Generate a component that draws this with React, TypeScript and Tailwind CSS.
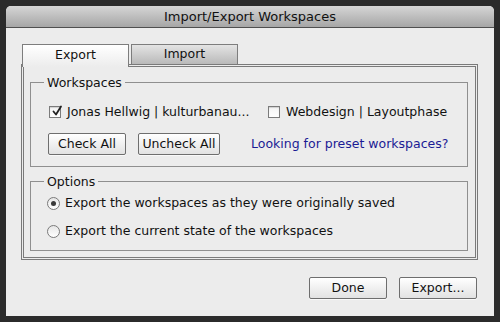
import type { ReactNode } from "react";

// Mac-style "Import/Export Workspaces" sheet, single tab panel.

function Checkbox({ checked }: { checked?: boolean }) {
  return (
    <span className="relative inline-block h-[12px] w-[12px] shrink-0 border border-[#7b7b7b] bg-gradient-to-b from-[#f4f4f4] to-[#ffffff] shadow-[inset_0_1px_1px_rgba(0,0,0,0.15)]">
      {checked && (
        <svg
          viewBox="0 0 12 12"
          className="absolute left-[1px] top-[-2px] h-[12px] w-[12px]"
          fill="none"
          stroke="#222"
          strokeWidth="1.8"
          strokeLinecap="round"
          strokeLinejoin="round"
        >
          <path d="M2.5 6.5 L5 9.5 L10 1.5" />
        </svg>
      )}
    </span>
  );
}

function Radio({ checked }: { checked?: boolean }) {
  return (
    <span className="flex h-[13px] w-[13px] shrink-0 items-center justify-center rounded-full border border-[#7a7a7a] bg-gradient-to-b from-[#e6e6e6] to-[#ffffff]">
      {checked && <span className="h-[5px] w-[5px] rounded-full bg-[#3a3a3a]" />}
    </span>
  );
}

function Button({ children, className = "" }: { children: ReactNode; className?: string }) {
  return (
    <button
      type="button"
      className={`flex h-[22px] items-center justify-center rounded-[2px] border border-[#6e6e6e] bg-gradient-to-b from-[#ffffff] to-[#e2e2e2] text-[12.5px] text-[#111] shadow-[0_1px_0_rgba(255,255,255,0.7)] ${className}`}
    >
      {children}
    </button>
  );
}

function Group({ label, children }: { label: string; children: ReactNode }) {
  return (
    <fieldset className="border border-[#8f8f8f]">
      <legend className="ml-[13px] px-[3px] text-[12.5px] leading-[15px]">{label}</legend>
      {children}
    </fieldset>
  );
}

export default function App() {
  return (
    <div className="h-[322px] w-[500px] bg-[#2b2b2b] px-[6px] pb-[6px] pt-[6px] font-['DejaVu_Sans',sans-serif] text-[12.5px] text-[#111]">
      <div className="flex h-full flex-col overflow-hidden rounded-t-[5px] bg-[#ececec]">
        <div className="flex h-[22px] shrink-0 items-center justify-center border-b border-[#4f4f4f] bg-gradient-to-b from-[#d6d6d6] to-[#a6a6a6] text-[13px] text-[#111]">
          Import/Export Workspaces
        </div>

        <div className="flex flex-1 flex-col pl-[15px] pr-[17px] pt-[16px]">
          {/* tabs */}
          <div className="flex items-start pl-[1px]">
            <div className="relative z-10 -mb-[3px] flex h-[23px] w-[107px] items-center justify-center border border-b-0 border-[#7d7d7d] bg-gradient-to-b from-[#ffffff] to-[#ececec] pb-[1px]">
              Export
            </div>
            <div className="ml-[2px] flex h-[20px] w-[107px] items-center justify-center border border-b-0 border-[#7d7d7d] bg-gradient-to-b from-[#e4e4e4] to-[#b9b9b9]">
              Import
            </div>
          </div>

          {/* tab panel */}
          <div className="flex h-[196px] w-[457px] flex-col border-[3px] border-double border-[#7a7a7a] pl-[6px] pr-[7px] pt-[8px]">
            <Group label="Workspaces">
              <div className="flex h-[16px] items-center pl-[18px] mt-[14px]">
                <label className="flex w-[219px] items-center gap-[6px]">
                  <Checkbox checked />
                  <span>Jonas Hellwig | kulturbanau...</span>
                </label>
                <label className="flex items-center gap-[6px]">
                  <Checkbox />
                  <span>Webdesign | Layoutphase</span>
                </label>
              </div>
              <div className="mb-[11px] mt-[13px] flex items-center pl-[17px]">
                <Button className="w-[78px]">Check All</Button>
                <Button className="ml-[12px] w-[82px]">Uncheck All</Button>
                <a className="ml-[31px] text-[#1b1b94]">Looking for preset workspaces?</a>
              </div>
            </Group>

            <div className="mt-[7px]">
              <Group label="Options">
                <div className="mb-[11px] mt-[6px] flex flex-col gap-[12px] pl-[16px]">
                  <label className="flex h-[16px] items-center gap-[5px]">
                    <Radio checked />
                    <span>Export the workspaces as they were originally saved</span>
                  </label>
                  <label className="flex h-[16px] items-center gap-[5px]">
                    <Radio />
                    <span>Export the current state of the workspaces</span>
                  </label>
                </div>
              </Group>
            </div>
          </div>

          {/* footer */}
          <div className="mt-[17px] flex justify-end gap-[12px]">
            <Button className="w-[78px]">Done</Button>
            <Button className="w-[78px]">Export...</Button>
          </div>
        </div>
      </div>
    </div>
  );
}
